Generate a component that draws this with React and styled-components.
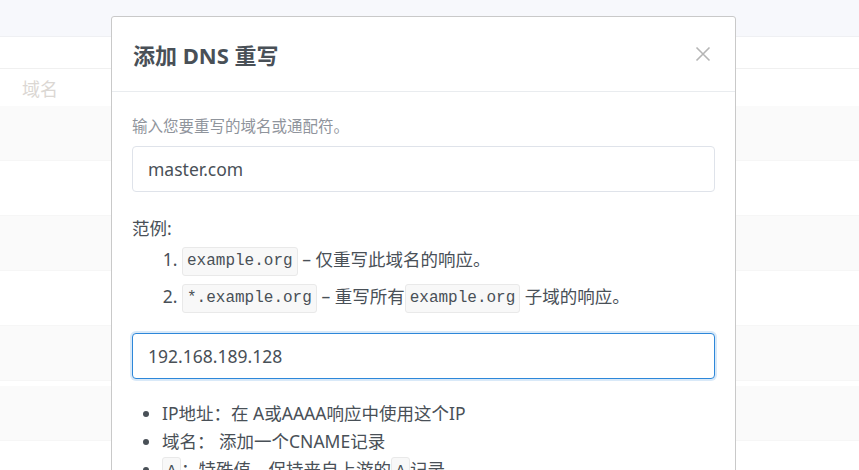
import styled, {createGlobalStyle} from 'styled-components';

const GlobalStyle = createGlobalStyle`
  html, body {
    margin: 0;
    padding: 0;
    background: #ffffff;
  }
  body {
    font-family: "Noto Sans", "Noto Sans CJK SC", sans-serif;
    color: #495057;
    overflow: hidden;
  }
`;

const rows = ['gray', 'white', 'gray', 'white', 'gray', 'gap', 'gray', 'white'];

export default function App() {
  return (
    <Page>
      <GlobalStyle />
      <Backdrop>
        <TopBar />
        <PlainRow />
        <HeaderRow>域名</HeaderRow>
        {rows.map((kind, i) => (
          <StripeRow key={i} $kind={kind} />
        ))}
      </Backdrop>

      <Modal>
        <ModalHeader>
          <Title>添加 DNS 重写</Title>
          <CloseButton aria-label="close">
            <svg width="16" height="16" viewBox="0 0 16 16">
              <path d="M1.5 1.5 L14.5 14.5 M14.5 1.5 L1.5 14.5" stroke="#b5b5b5" strokeWidth="1.6" fill="none" />
            </svg>
          </CloseButton>
        </ModalHeader>

        <ModalBody>
          <Hint>输入您要重写的域名或通配符。</Hint>
          <Input defaultValue="master.com" />

          <Label>范例:</Label>
          <ExampleList>
            <li>
              <Code>example.org</Code> – 仅重写此域名的响应。
            </li>
            <li>
              <Code>*.example.org</Code> – 重写所有<Code>example.org</Code> 子域的响应。
            </li>
          </ExampleList>

          <Input defaultValue="192.168.189.128" $focused />

          <BulletList>
            <li>IP地址：在 A或AAAA响应中使用这个IP</li>
            <li>域名： 添加一个CNAME记录</li>
            <li>
              <Code $small>A</Code>：特殊值，保持来自上游的<Code $small>A</Code>记录
            </li>
          </BulletList>
        </ModalBody>
      </Modal>
    </Page>
  );
}

const Page = styled.div`
  position: relative;
  width: 859px;
  height: 470px;
  overflow: hidden;
`;

const Backdrop = styled.div`
  display: flex;
  flex-direction: column;
`;

const TopBar = styled.div`
  height: 36px;
  background: #f7f8fc;
  border-bottom: 1px solid #eff0f3;
`;

const PlainRow = styled.div`
  height: 31px;
  border-bottom: 1px solid #f0f0f0;
`;

const HeaderRow = styled.div`
  height: 37px;
  display: flex;
  align-items: center;
  padding-left: 22px;
  font-size: 18px;
  color: #dbd7d3;
`;

const StripeRow = styled.div`
  height: ${p => (p.$kind === 'gap' ? '5px' : '54px')};
  background: ${p => (p.$kind === 'gray' ? '#fafafa' : '#ffffff')};
  border-bottom: ${p => (p.$kind === 'gap' ? 'none' : '1px solid #f6f6f6')};
`;

const Modal = styled.div`
  position: absolute;
  left: 111px;
  top: 16px;
  width: 623px;
  height: 520px;
  background: #ffffff;
  border: 1px solid #c9c9c9;
  border-radius: 3px;
`;

const ModalHeader = styled.div`
  display: flex;
  align-items: center;
  justify-content: space-between;
  height: 74px;
  padding: 0 24px 0 21px;
  border-bottom: 1px solid #e9ecef;
`;

const Title = styled.h3`
  margin: 0;
  font-size: 22px;
  font-weight: 700;
  color: #495057;
`;

const CloseButton = styled.button`
  display: flex;
  background: transparent;
  border: none;
  padding: 0;
  cursor: pointer;
`;

const ModalBody = styled.div`
  padding: 24px 20px 0 20px;
`;

const Hint = styled.div`
  font-size: 15.5px;
  line-height: 20px;
  color: #8f949c;
  margin-bottom: 10px;
`;

const Input = styled.input`
  display: block;
  box-sizing: border-box;
  width: 100%;
  height: 46px;
  padding: 0 15px;
  font-family: inherit;
  font-size: 17.5px;
  color: #495057;
  background: #ffffff;
  border: 1px solid ${p => (p.$focused ? '#2d87d9' : '#dfe3ea')};
  border-radius: 4px;
  box-shadow: ${p => (p.$focused ? '0 0 0 2px rgba(45, 135, 217, 0.18)' : 'none')};
  outline: none;
`;

const Label = styled.div`
  margin-top: 24px;
  font-size: 17.5px;
  line-height: 24px;
`;

const ExampleList = styled.ol`
  margin: 5px 0 22px 0;
  padding-left: 50px;
  font-size: 17.5px;

  li {
    height: 29px;
    line-height: 29px;
    margin-bottom: 8px;
  }
  li:last-child {
    margin-bottom: 0;
  }
`;

const Code = styled.code`
  display: inline-block;
  font-family: "Liberation Mono", "DejaVu Sans Mono", monospace;
  font-size: ${p => (p.$small ? '15px' : '16px')};
  line-height: 27px;
  padding: 0 4px;
  color: #495057;
  background: #f8f8f8;
  border: 1px solid #e9e9e9;
  border-radius: 3px;
  vertical-align: middle;
`;

const BulletList = styled.ul`
  margin: 20px 0 0 0;
  padding-left: 30px;
  font-size: 17.5px;

  li {
    height: 28px;
    line-height: 28px;
  }
`;
